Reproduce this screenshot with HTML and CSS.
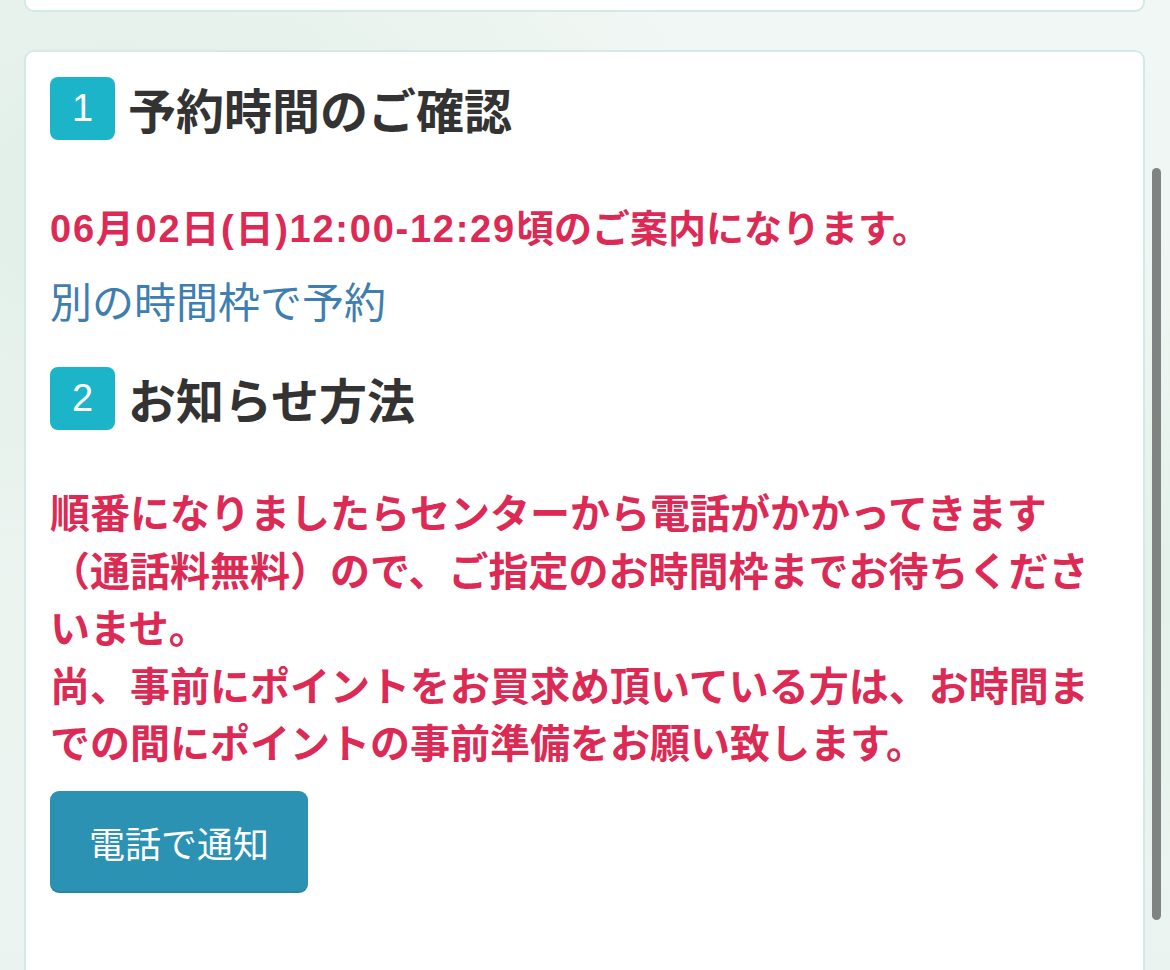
FILE: index.html
```html
<!DOCTYPE html>
<html lang="ja">
<head>
<meta charset="utf-8">
<title>予約時間のご確認</title>
<link rel="stylesheet" href="styles.css">
</head>
<body>
<div class="page">
  <div class="card card-top"></div>
  <section class="card card-main">
    <h2 class="step">
      <span class="step-num">1</span>
      <span class="step-title">予約時間のご確認</span>
    </h2>
    <p class="notice-time"><span class="notice-date">06月02日(日)12:00-12:29</span>頃のご案内になります。</p>
    <a class="link" href="#">別の時間枠で予約</a>
    <h2 class="step step-second">
      <span class="step-num">2</span>
      <span class="step-title">お知らせ方法</span>
    </h2>
    <p class="notice-body">順番になりましたらセンターから電話がかかってきます<br>（通話料無料）ので、ご指定のお時間枠までお待ちくださいませ。<br>尚、事前にポイントをお買求め頂いている方は、お時間までの間にポイントの事前準備をお願い致します。</p>
    <button class="btn" type="button">電話で通知</button>
  </section>
</div>
<div class="scrollbar"></div>
</body>
</html>
```

FILE: styles.css
```css
html, body {
  margin: 0;
  padding: 0;
  height: 100%;
  overflow: hidden;
}
body {
  font-family: "Liberation Sans", "Noto Sans CJK JP", sans-serif;
  background-color: #eef5f2;
  background-image:
    radial-gradient(ellipse at 10% 20%, rgba(220, 236, 228, 0.8) 0, rgba(238, 245, 242, 0) 40%),
    radial-gradient(ellipse at 90% 60%, rgba(222, 238, 230, 0.7) 0, rgba(238, 245, 242, 0) 35%),
    linear-gradient(180deg, #f1f7f4, #eaf3ef);
}
.page {
  display: flex;
  flex-direction: column;
  gap: 38px;
  padding: 0 25px 0 24px;
}
.card {
  background: #fff;
  border: 2px solid #d3e9e8;
  border-radius: 10px;
  box-sizing: border-box;
}
.card-top {
  height: 12px;
  border-top: none;
  border-radius: 0 0 10px 10px;
}
.card-main {
  min-height: 1000px;
  padding: 25px 24px 40px;
  display: flex;
  flex-direction: column;
  align-items: flex-start;
}
.step {
  margin: 0;
  display: flex;
  align-items: center;
  gap: 13px;
}
.step-num {
  width: 65px;
  height: 63px;
  border-radius: 8px;
  background: #1cb4c8;
  color: #fff;
  font-family: "Liberation Sans", sans-serif;
  font-weight: 400;
  font-size: 38px;
  display: flex;
  align-items: center;
  justify-content: center;
}
.step-title {
  font-family: "Noto Sans CJK JP", sans-serif;
  font-weight: 700;
  font-size: 48px;
  color: #333;
  line-height: 63px;
}
.notice-time {
  margin: 62px 0 0;
  font-size: 38px;
  line-height: 54px;
  font-weight: 700;
  color: #dc2a55;
}
.notice-date {
  letter-spacing: 1.75px;
}
.link {
  margin-top: 18px;
  font-size: 42px;
  line-height: 59px;
  color: #3e7eb0;
  text-decoration: none;
}
.step-second {
  margin-top: 34px;
}
.notice-body {
  margin: 56px 0 0;
  font-size: 40px;
  line-height: 57.5px;
  font-weight: 700;
  color: #dc2a55;
  width: 100%;
}
.btn {
  margin-top: 17px;
  width: 258px;
  height: 102px;
  border: none;
  border-radius: 9px;
  background: #2b92b3;
  box-shadow: inset 0 -2px 0 rgba(0, 0, 0, 0.08);
  color: #fff;
  font-family: "Noto Sans CJK JP", sans-serif;
  font-size: 36px;
  font-weight: 400;
  padding: 0;
}
.scrollbar {
  position: fixed;
  left: 1152px;
  top: 168px;
  width: 9px;
  height: 752px;
  border-radius: 5px;
  background: #7f8482;
}
```
